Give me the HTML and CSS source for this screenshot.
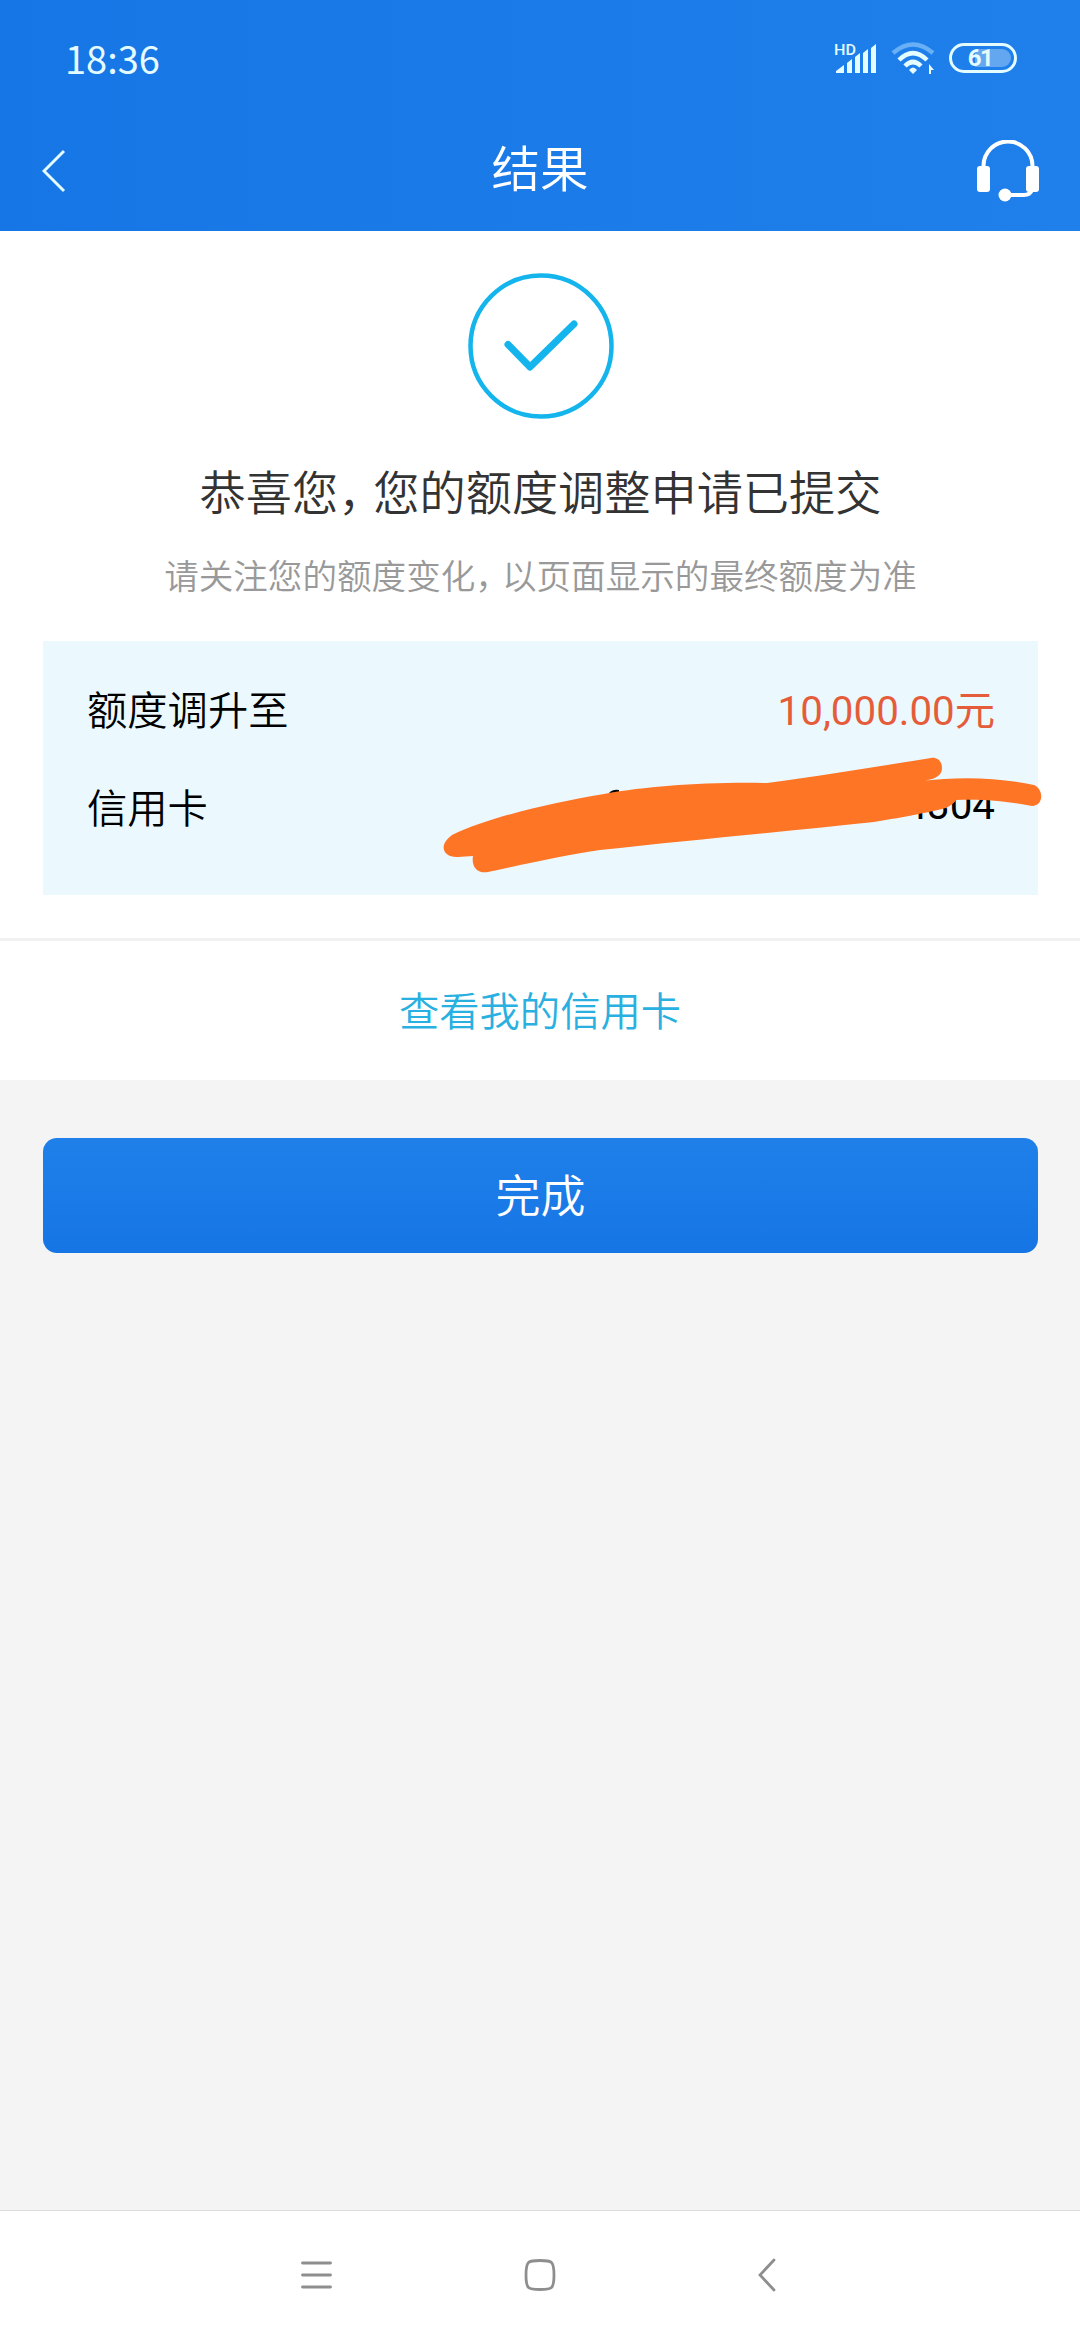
FILE: index.html
```html
<!DOCTYPE html>
<html lang="zh-CN">
<head>
<meta charset="utf-8">
<title>结果</title>
<link rel="stylesheet" href="styles.css">
</head>
<body>
<div class="screen">
  <header class="top">
    <div class="status">
      <span class="clock">18:36</span>
      <div class="indicators">
        <svg class="signal" width="43" height="34" viewBox="0 -2 43 34">
          <text class="hd" x="0" y="12" textLength="22" lengthAdjust="spacingAndGlyphs">HD</text>
          <path d="M2 30v-2l8-6v8zM13 30V20l5-4v14zM21 30V14l5-4v20zM29 30V10l5-4v24zM37 30V5l5-4v29z"/>
        </svg>
        <svg class="wifi" width="44" height="32" viewBox="0 0 44 32">
          <path class="wave faint" d="M2 11Q22-6 42 11"/>
          <path class="wave" d="M8 18Q22 4 36 18M14 24Q22 16 30 24"/>
          <path class="dot" d="M18 28q4-5 8 0l-4 4z"/>
          <path class="dot" d="M38 32V22l5 6h-3v4z"/>
        </svg>
        <div class="battery"><span>61</span></div>
      </div>
    </div>
    <div class="titlebar">
      <svg class="back" width="24" height="44" viewBox="0 0 24 44"><path d="M22 2 2 22l20 20"/></svg>
      <h1>结果</h1>
      <svg class="headset" width="62" height="62" viewBox="0 0 62 62">
        <path class="band" d="M6.500 28V26a24 24 0 0 1 49 0v2M55 50q-2 5-8 5H28"/>
        <rect x="0" y="26" width="13" height="26" rx="3"/>
        <rect x="49" y="26" width="13" height="26" rx="3"/>
        <circle cx="28" cy="55" r="6.500"/>
      </svg>
    </div>
  </header>
  <main>
    <section class="result">
      <svg class="check" width="146" height="146" viewBox="0 0 146 146">
        <circle cx="73" cy="73" r="70.500"/>
        <path d="M40 71.500 62 94 106 51"/>
      </svg>
      <h2>恭喜您<span class="comma">，</span>您的额度调整申请已提交</h2>
      <p class="hint">请关注您的额度变化<span class="comma">，</span>以页面显示的最终额度为准</p>
      <div class="details">
        <div class="row"><span>额度调升至</span><span class="amount">10,000.00元</span></div>
        <div class="row"><span>信用卡</span><span class="number">4304</span></div>
        <svg class="scribble" width="604" height="120" viewBox="440 755 604 120">
          <path class="ink" d="M609 793q4-4 10-3v4z"/>
          <path d="M604 794C550 803 490 817 452 835C437 846 444 858 458 857L473 856C471 867 478 874 488 872C525 864 570 854 600 850C690 840 790 831 874 822C905 817 935 811 946 808Q955 803 956 800C985 799 1005 801 1032 806C1044 806 1044 789 1034 785C1005 779 975 777 944 779L925 780.500C936 779 942 775 942 768C942 761 937 757 931 758C880 766 820 776 767 783C700 782 650 786 604 794Z"/>
        </svg>
      </div>
    </section>
    <a class="link">查看我的信用卡</a>
    <div class="action"><button>完成</button></div>
  </main>
  <nav>
    <svg width="32" height="34" viewBox="0 0 32 34"><path d="M1.500 5h28M1.500 17h28M1.500 29h28"/></svg>
    <svg class="home" width="34" height="34" viewBox="0 0 34 34"><path d="M17 2.500C29 2.500 31 3 31 17S29 31.500 17 31.500 3 31 3 17 5 2.500 17 2.500Z"/></svg>
    <svg class="previous" width="20" height="34" viewBox="0 0 20 34"><path d="M17 2 3 17l14 15"/></svg>
  </nav>
</div>
</body>
</html>
```
FILE: styles.css
```css
* { box-sizing: border-box; }
body {
  margin: 0;
  font-family: Roboto, "Noto Sans CJK SC", sans-serif;
  font-weight: 350;
}
h1, h2, p { margin: 0; font-weight: 350; }
svg { display: block; flex: none; }
.screen {
  width: 1080px;
  height: 2340px;
  display: flex;
  flex-direction: column;
  background: #f4f4f4;
}
.top {
  height: 231px;
  color: #fff;
  background: linear-gradient(90deg, #1676e5, #1f80eb);
}
.status {
  height: 116px;
  padding: 0 63px 0 65px;
  display: flex;
  align-items: center;
  justify-content: space-between;
}
.clock {
  font: 400 38px/50px "Noto Sans CJK SC", sans-serif;
  color: #e4fbff;
}
.indicators {
  display: flex;
  align-items: center;
  gap: 14px;
  color: #e4fbff;
}
.signal, .wifi .dot { fill: #e4fbff; }
.hd { font: 500 15px Roboto, sans-serif; }
.wave { fill: none; stroke: #e4fbff; stroke-width: 4.500; }
.faint { stroke: #68aff5; }
.battery {
  width: 68px;
  height: 30px;
  border: 3px solid #e4fbff;
  border-radius: 15px;
  padding: 3px;
  display: flex;
}
.battery span {
  flex: 1;
  border-radius: 9px;
  background: linear-gradient(90deg, transparent 35%, #62a7f0 35%);
  font: 700 24px/19px Roboto, sans-serif;
  letter-spacing: -1.500px;
  padding-right: 6px;
  text-align: center;
}
.titlebar {
  height: 115px;
  padding: 0 42px;
  display: grid;
  grid-template-columns: 62px 1fr 62px;
  align-items: center;
}
.titlebar h1 { font-size: 48.500px; line-height: 60px; text-align: center; padding-bottom: 6px; }
.back { fill: none; stroke: #e4fbff; stroke-width: 3; margin-bottom: 5px; }
.headset { fill: #fff; margin-bottom: 5px; margin-left: 1px; }
.band { fill: none; stroke: #fff; stroke-width: 4; }
.result {
  height: 710px;
  padding: 42px 42px 0 43px;
  background: #fff;
  border-bottom: 3px solid #f1f1f1;
  display: flex;
  flex-direction: column;
  align-items: center;
}
.check { fill: none; stroke: #14b4ec; stroke-width: 4.500; }
.check path { stroke-width: 7; stroke-linecap: round; stroke-linejoin: round; }
h2 { margin-top: 43px; font-size: 46.200px; line-height: 64px; color: #333; white-space: nowrap; }
h2 .comma { letter-spacing: -11px; }
.hint { margin-top: 26px; font-size: 34.600px; line-height: 50px; color: #999; white-space: nowrap; }
.hint .comma { letter-spacing: -8px; }
.details {
  position: relative;
  align-self: stretch;
  height: 254px;
  margin-top: 39px;
  padding: 17px 43px 0 44px;
  background: #ebf9fe;
  font-size: 40.300px;
  color: #000;
}
.row { height: 98px; display: flex; align-items: center; justify-content: space-between; }
.amount, .number { font-weight: 400; }
.amount { color: #e55c3b; }
.scribble { position: absolute; left: 397px; top: 114px; fill: #ff7526; }
.ink { fill: #000; }
.link {
  height: 139px;
  padding-bottom: 5px;
  background: #fff;
  color: #29b0e1;
  font-size: 40.300px;
  display: flex;
  align-items: center;
  justify-content: center;
}
.action { padding: 58px 42px 0 43px; }
button {
  display: block;
  width: 100%;
  height: 115px;
  border: 0;
  border-radius: 14px;
  padding: 0 0 4px;
  background: linear-gradient(#1f80ea, #1675e4);
  color: #fff;
  font: 350 45px "Noto Sans CJK SC", sans-serif;
}
nav {
  margin-top: auto;
  height: 130px;
  border-top: 1px solid #ddd;
  background: #fff;
  padding: 0 0 2px 301px;
  display: flex;
  align-items: center;
}
nav svg { fill: none; stroke: #8e8e8e; stroke-width: 2.800; stroke-linecap: round; }
.home { margin-left: 190px; }
.previous { margin-left: 200px; }
```
